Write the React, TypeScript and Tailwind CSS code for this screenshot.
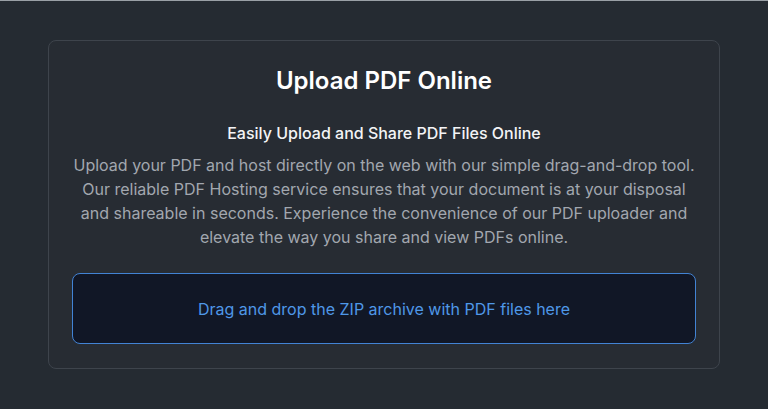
import React from 'react';

export default function App() {
  return (
    <div
      className="min-h-[409px] w-full bg-[#252b32] border-t border-b border-[#9aa0a6] px-12 pt-[39px] pb-[40px]"
      style={{ fontFamily: 'Inter, "Noto Sans", sans-serif' }}
    >
      <div className="mx-auto max-w-2xl rounded-lg border border-[#3e444c] bg-[#272c33] px-[23px] py-6 text-center">
        <h1 className="text-2xl font-semibold leading-8 text-white">Upload PDF Online</h1>
        <h2 className="mt-6 text-base font-medium leading-6 text-[#f3f4f6]">
          Easily Upload and Share PDF Files Online
        </h2>
        <p className="mt-2 text-base leading-6 text-[#a2a7af]">
          Upload your PDF and host directly on the web with our simple drag-and-drop tool. Our reliable
          PDF Hosting service ensures that your document is at your disposal and shareable in seconds.
          Experience the convenience of our PDF uploader and elevate the way you share and view PDFs online.
        </p>
        <div className="mt-6 flex h-[71px] items-center justify-center rounded-lg border border-[#4283d4] bg-[#111726]">
          <span className="text-base text-[#4f98e8]">Drag and drop the ZIP archive with PDF files here</span>
        </div>
      </div>
    </div>
  );
}
